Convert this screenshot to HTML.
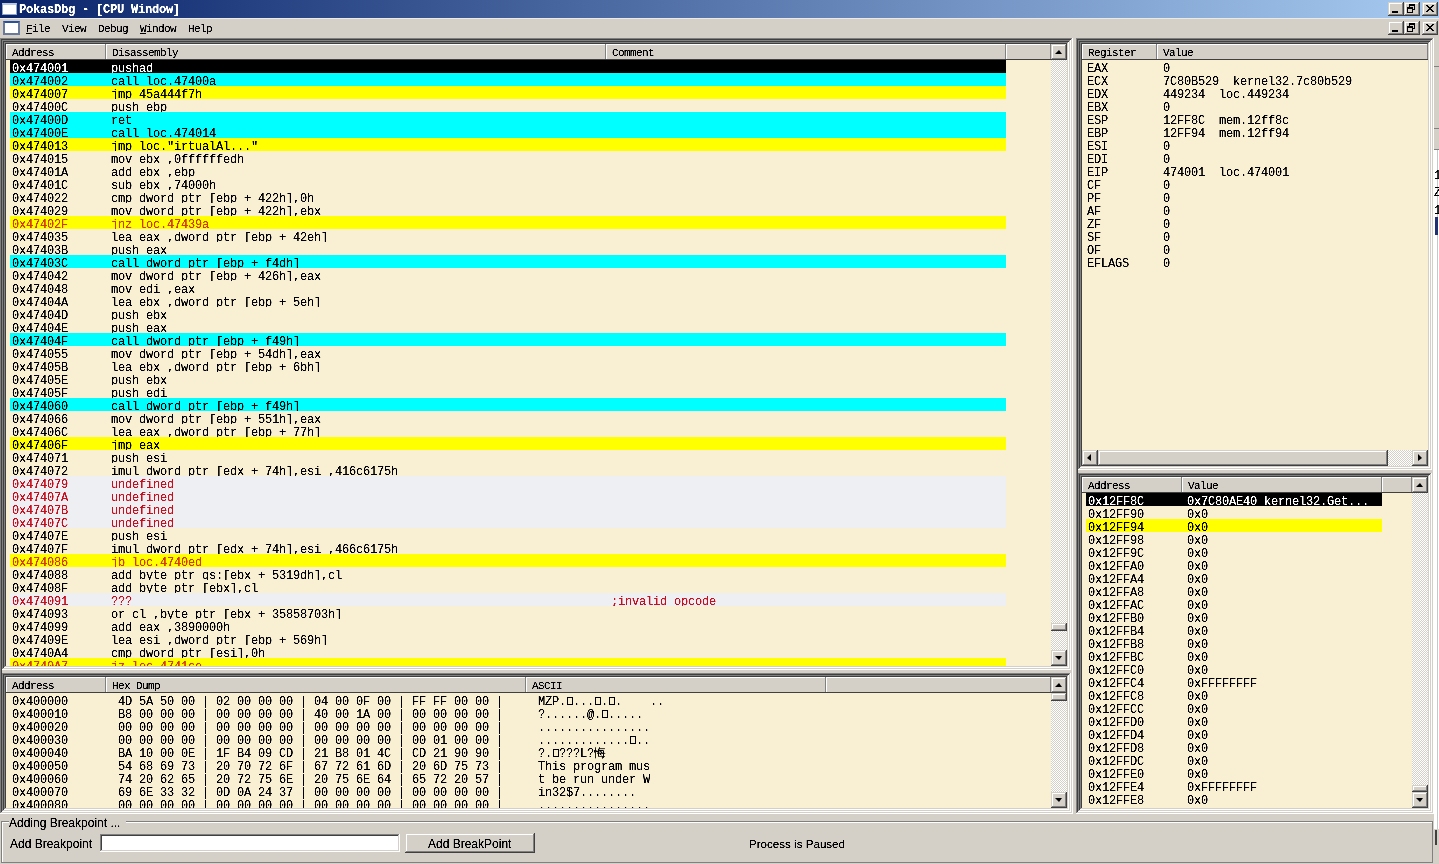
<!DOCTYPE html><html><head><meta charset="utf-8"><style>
*{margin:0;padding:0}
html,body{width:1439px;height:864px;overflow:hidden;background:#d4d0c8}
body{position:relative}
i,b,div{position:absolute;display:block}
b{font-weight:normal;white-space:pre;line-height:13px}
.m{font-family:"Liberation Mono",monospace;font-size:12px;letter-spacing:-0.2px}
.h{font-family:"Liberation Mono",monospace;font-size:11px;letter-spacing:-0.6px}
.s{font-family:"Liberation Sans",sans-serif;font-size:12px;line-height:14px}
.x{font-family:"Liberation Sans",sans-serif;font-size:10px;line-height:12px;font-weight:bold}
</style></head><body><svg width="0" height="0" style="position:absolute"><filter id="th" x="0" y="0" width="100%" height="100%"><feComponentTransfer><feFuncA type="discrete" tableValues="0 1"/></feComponentTransfer></filter><filter id="th2" x="0" y="0" width="100%" height="100%"><feComponentTransfer><feFuncA type="linear" slope="2.5" intercept="-0.5"/></feComponentTransfer></filter></svg><i style="left:0px;top:0px;width:1439px;height:864px;background:#d4d0c8;"></i>
<i style="left:0px;top:0px;width:1439px;height:18px;background:linear-gradient(to right,#0a246a,#a6caf0);"></i>
<i style="left:2px;top:3px;width:15px;height:12px;background:#ffffff;border:1px solid #8ea4c8;border-top:2px solid #b8c8e0;box-sizing:border-box"></i>
<i style="left:1388px;top:2px;width:16px;height:14px;background:#d4d0c8;"></i>
<i style="left:1388px;top:2px;width:16px;height:1px;background:#d4d0c8;"></i>
<i style="left:1388px;top:2px;width:1px;height:14px;background:#d4d0c8;"></i>
<i style="left:1389px;top:3px;width:14px;height:1px;background:#ffffff;"></i>
<i style="left:1389px;top:3px;width:1px;height:12px;background:#ffffff;"></i>
<i style="left:1388px;top:15px;width:16px;height:1px;background:#404040;"></i>
<i style="left:1403px;top:2px;width:1px;height:14px;background:#404040;"></i>
<i style="left:1389px;top:14px;width:14px;height:1px;background:#808080;"></i>
<i style="left:1402px;top:3px;width:1px;height:12px;background:#808080;"></i>
<i style="left:1404px;top:2px;width:16px;height:14px;background:#d4d0c8;"></i>
<i style="left:1404px;top:2px;width:16px;height:1px;background:#d4d0c8;"></i>
<i style="left:1404px;top:2px;width:1px;height:14px;background:#d4d0c8;"></i>
<i style="left:1405px;top:3px;width:14px;height:1px;background:#ffffff;"></i>
<i style="left:1405px;top:3px;width:1px;height:12px;background:#ffffff;"></i>
<i style="left:1404px;top:15px;width:16px;height:1px;background:#404040;"></i>
<i style="left:1419px;top:2px;width:1px;height:14px;background:#404040;"></i>
<i style="left:1405px;top:14px;width:14px;height:1px;background:#808080;"></i>
<i style="left:1418px;top:3px;width:1px;height:12px;background:#808080;"></i>
<i style="left:1422px;top:2px;width:16px;height:14px;background:#d4d0c8;"></i>
<i style="left:1422px;top:2px;width:16px;height:1px;background:#d4d0c8;"></i>
<i style="left:1422px;top:2px;width:1px;height:14px;background:#d4d0c8;"></i>
<i style="left:1423px;top:3px;width:14px;height:1px;background:#ffffff;"></i>
<i style="left:1423px;top:3px;width:1px;height:12px;background:#ffffff;"></i>
<i style="left:1422px;top:15px;width:16px;height:1px;background:#404040;"></i>
<i style="left:1437px;top:2px;width:1px;height:14px;background:#404040;"></i>
<i style="left:1423px;top:14px;width:14px;height:1px;background:#808080;"></i>
<i style="left:1436px;top:3px;width:1px;height:12px;background:#808080;"></i>
<i style="left:0px;top:18px;width:1439px;height:20px;background:#d4d0c8;"></i>
<i style="left:0px;top:18px;width:1439px;height:1px;background:#eceae6;"></i>
<i style="left:3px;top:21px;width:17px;height:14px;background:#fff;border:2px solid #6a7a9a;border-top:2px solid #2850a0;box-sizing:border-box"></i>
<i style="left:26px;top:33px;width:6px;height:1px;background:#000;"></i>
<i style="left:140px;top:33px;width:6px;height:1px;background:#000;"></i>
<i style="left:1388px;top:21px;width:16px;height:14px;background:#d4d0c8;"></i>
<i style="left:1388px;top:21px;width:16px;height:1px;background:#d4d0c8;"></i>
<i style="left:1388px;top:21px;width:1px;height:14px;background:#d4d0c8;"></i>
<i style="left:1389px;top:22px;width:14px;height:1px;background:#ffffff;"></i>
<i style="left:1389px;top:22px;width:1px;height:12px;background:#ffffff;"></i>
<i style="left:1388px;top:34px;width:16px;height:1px;background:#404040;"></i>
<i style="left:1403px;top:21px;width:1px;height:14px;background:#404040;"></i>
<i style="left:1389px;top:33px;width:14px;height:1px;background:#808080;"></i>
<i style="left:1402px;top:22px;width:1px;height:12px;background:#808080;"></i>
<i style="left:1404px;top:21px;width:16px;height:14px;background:#d4d0c8;"></i>
<i style="left:1404px;top:21px;width:16px;height:1px;background:#d4d0c8;"></i>
<i style="left:1404px;top:21px;width:1px;height:14px;background:#d4d0c8;"></i>
<i style="left:1405px;top:22px;width:14px;height:1px;background:#ffffff;"></i>
<i style="left:1405px;top:22px;width:1px;height:12px;background:#ffffff;"></i>
<i style="left:1404px;top:34px;width:16px;height:1px;background:#404040;"></i>
<i style="left:1419px;top:21px;width:1px;height:14px;background:#404040;"></i>
<i style="left:1405px;top:33px;width:14px;height:1px;background:#808080;"></i>
<i style="left:1418px;top:22px;width:1px;height:12px;background:#808080;"></i>
<i style="left:1422px;top:21px;width:16px;height:14px;background:#d4d0c8;"></i>
<i style="left:1422px;top:21px;width:16px;height:1px;background:#d4d0c8;"></i>
<i style="left:1422px;top:21px;width:1px;height:14px;background:#d4d0c8;"></i>
<i style="left:1423px;top:22px;width:14px;height:1px;background:#ffffff;"></i>
<i style="left:1423px;top:22px;width:1px;height:12px;background:#ffffff;"></i>
<i style="left:1422px;top:34px;width:16px;height:1px;background:#404040;"></i>
<i style="left:1437px;top:21px;width:1px;height:14px;background:#404040;"></i>
<i style="left:1423px;top:33px;width:14px;height:1px;background:#808080;"></i>
<i style="left:1436px;top:22px;width:1px;height:12px;background:#808080;"></i>
<i style="left:1392px;top:11px;width:6px;height:2px;background:#000;"></i>
<i style="left:1409px;top:4px;width:4px;height:3px;border:1px solid #000;border-top-width:2px;background:transparent"></i>
<i style="left:1407px;top:7px;width:4px;height:3px;border:1px solid #000;border-top-width:2px;background:#d4d0c8"></i>
<i style="left:1426px;top:5px;width:2px;height:1px;background:#000;"></i>
<i style="left:1432px;top:5px;width:2px;height:1px;background:#000;"></i>
<i style="left:1427px;top:6px;width:2px;height:1px;background:#000;"></i>
<i style="left:1431px;top:6px;width:2px;height:1px;background:#000;"></i>
<i style="left:1428px;top:7px;width:2px;height:1px;background:#000;"></i>
<i style="left:1430px;top:7px;width:2px;height:1px;background:#000;"></i>
<i style="left:1429px;top:8px;width:2px;height:1px;background:#000;"></i>
<i style="left:1428px;top:9px;width:2px;height:1px;background:#000;"></i>
<i style="left:1430px;top:9px;width:2px;height:1px;background:#000;"></i>
<i style="left:1427px;top:10px;width:2px;height:1px;background:#000;"></i>
<i style="left:1431px;top:10px;width:2px;height:1px;background:#000;"></i>
<i style="left:1426px;top:11px;width:2px;height:1px;background:#000;"></i>
<i style="left:1432px;top:11px;width:2px;height:1px;background:#000;"></i>
<i style="left:1392px;top:30px;width:6px;height:2px;background:#000;"></i>
<i style="left:1409px;top:23px;width:4px;height:3px;border:1px solid #000;border-top-width:2px;background:transparent"></i>
<i style="left:1407px;top:26px;width:4px;height:3px;border:1px solid #000;border-top-width:2px;background:#d4d0c8"></i>
<i style="left:1426px;top:24px;width:2px;height:1px;background:#000;"></i>
<i style="left:1432px;top:24px;width:2px;height:1px;background:#000;"></i>
<i style="left:1427px;top:25px;width:2px;height:1px;background:#000;"></i>
<i style="left:1431px;top:25px;width:2px;height:1px;background:#000;"></i>
<i style="left:1428px;top:26px;width:2px;height:1px;background:#000;"></i>
<i style="left:1430px;top:26px;width:2px;height:1px;background:#000;"></i>
<i style="left:1429px;top:27px;width:2px;height:1px;background:#000;"></i>
<i style="left:1428px;top:28px;width:2px;height:1px;background:#000;"></i>
<i style="left:1430px;top:28px;width:2px;height:1px;background:#000;"></i>
<i style="left:1427px;top:29px;width:2px;height:1px;background:#000;"></i>
<i style="left:1431px;top:29px;width:2px;height:1px;background:#000;"></i>
<i style="left:1426px;top:30px;width:2px;height:1px;background:#000;"></i>
<i style="left:1432px;top:30px;width:2px;height:1px;background:#000;"></i>
<i style="left:6px;top:44px;width:1061px;height:622px;background:#f9f0d3;"></i>
<i style="left:6px;top:677px;width:1061px;height:131px;background:#f9f0d3;"></i>
<i style="left:1082px;top:44px;width:346px;height:422px;background:#f9f0d3;"></i>
<i style="left:1082px;top:477px;width:346px;height:331px;background:#f9f0d3;"></i>
<i style="left:5px;top:43px;width:1063px;height:1px;background:#404040;"></i>
<i style="left:5px;top:43px;width:1px;height:624px;background:#404040;"></i>
<i style="left:5px;top:666px;width:1063px;height:1px;background:#d4d0c8;"></i>
<i style="left:1067px;top:43px;width:1px;height:624px;background:#d4d0c8;"></i>
<i style="left:4px;top:42px;width:1065px;height:1px;background:#808080;"></i>
<i style="left:4px;top:42px;width:1px;height:626px;background:#808080;"></i>
<i style="left:4px;top:667px;width:1065px;height:1px;background:#ffffff;"></i>
<i style="left:1068px;top:42px;width:1px;height:626px;background:#ffffff;"></i>
<i style="left:3px;top:41px;width:1067px;height:1px;background:#404040;"></i>
<i style="left:3px;top:41px;width:1px;height:628px;background:#404040;"></i>
<i style="left:3px;top:668px;width:1067px;height:1px;background:#d4d0c8;"></i>
<i style="left:1069px;top:41px;width:1px;height:628px;background:#d4d0c8;"></i>
<i style="left:2px;top:40px;width:1069px;height:1px;background:#808080;"></i>
<i style="left:2px;top:40px;width:1px;height:630px;background:#808080;"></i>
<i style="left:2px;top:669px;width:1069px;height:1px;background:#ffffff;"></i>
<i style="left:1070px;top:40px;width:1px;height:630px;background:#ffffff;"></i>
<i style="left:5px;top:676px;width:1063px;height:1px;background:#404040;"></i>
<i style="left:5px;top:676px;width:1px;height:133px;background:#404040;"></i>
<i style="left:5px;top:808px;width:1063px;height:1px;background:#d4d0c8;"></i>
<i style="left:1067px;top:676px;width:1px;height:133px;background:#d4d0c8;"></i>
<i style="left:4px;top:675px;width:1065px;height:1px;background:#808080;"></i>
<i style="left:4px;top:675px;width:1px;height:135px;background:#808080;"></i>
<i style="left:4px;top:809px;width:1065px;height:1px;background:#ffffff;"></i>
<i style="left:1068px;top:675px;width:1px;height:135px;background:#ffffff;"></i>
<i style="left:3px;top:674px;width:1067px;height:1px;background:#404040;"></i>
<i style="left:3px;top:674px;width:1px;height:137px;background:#404040;"></i>
<i style="left:3px;top:810px;width:1067px;height:1px;background:#d4d0c8;"></i>
<i style="left:1069px;top:674px;width:1px;height:137px;background:#d4d0c8;"></i>
<i style="left:2px;top:673px;width:1069px;height:1px;background:#808080;"></i>
<i style="left:2px;top:673px;width:1px;height:139px;background:#808080;"></i>
<i style="left:2px;top:811px;width:1069px;height:1px;background:#ffffff;"></i>
<i style="left:1070px;top:673px;width:1px;height:139px;background:#ffffff;"></i>
<i style="left:1081px;top:43px;width:348px;height:1px;background:#404040;"></i>
<i style="left:1081px;top:43px;width:1px;height:424px;background:#404040;"></i>
<i style="left:1081px;top:466px;width:348px;height:1px;background:#d4d0c8;"></i>
<i style="left:1428px;top:43px;width:1px;height:424px;background:#d4d0c8;"></i>
<i style="left:1080px;top:42px;width:350px;height:1px;background:#808080;"></i>
<i style="left:1080px;top:42px;width:1px;height:426px;background:#808080;"></i>
<i style="left:1080px;top:467px;width:350px;height:1px;background:#ffffff;"></i>
<i style="left:1429px;top:42px;width:1px;height:426px;background:#ffffff;"></i>
<i style="left:1079px;top:41px;width:352px;height:1px;background:#404040;"></i>
<i style="left:1079px;top:41px;width:1px;height:428px;background:#404040;"></i>
<i style="left:1079px;top:468px;width:352px;height:1px;background:#d4d0c8;"></i>
<i style="left:1430px;top:41px;width:1px;height:428px;background:#d4d0c8;"></i>
<i style="left:1078px;top:40px;width:354px;height:1px;background:#808080;"></i>
<i style="left:1078px;top:40px;width:1px;height:430px;background:#808080;"></i>
<i style="left:1078px;top:469px;width:354px;height:1px;background:#ffffff;"></i>
<i style="left:1431px;top:40px;width:1px;height:430px;background:#ffffff;"></i>
<i style="left:1081px;top:476px;width:348px;height:1px;background:#404040;"></i>
<i style="left:1081px;top:476px;width:1px;height:333px;background:#404040;"></i>
<i style="left:1081px;top:808px;width:348px;height:1px;background:#d4d0c8;"></i>
<i style="left:1428px;top:476px;width:1px;height:333px;background:#d4d0c8;"></i>
<i style="left:1080px;top:475px;width:350px;height:1px;background:#808080;"></i>
<i style="left:1080px;top:475px;width:1px;height:335px;background:#808080;"></i>
<i style="left:1080px;top:809px;width:350px;height:1px;background:#ffffff;"></i>
<i style="left:1429px;top:475px;width:1px;height:335px;background:#ffffff;"></i>
<i style="left:1079px;top:474px;width:352px;height:1px;background:#404040;"></i>
<i style="left:1079px;top:474px;width:1px;height:337px;background:#404040;"></i>
<i style="left:1079px;top:810px;width:352px;height:1px;background:#d4d0c8;"></i>
<i style="left:1430px;top:474px;width:1px;height:337px;background:#d4d0c8;"></i>
<i style="left:1078px;top:473px;width:354px;height:1px;background:#808080;"></i>
<i style="left:1078px;top:473px;width:1px;height:339px;background:#808080;"></i>
<i style="left:1078px;top:811px;width:354px;height:1px;background:#ffffff;"></i>
<i style="left:1431px;top:473px;width:1px;height:339px;background:#ffffff;"></i>
<i style="left:0px;top:38px;width:1px;height:775px;background:#808080;"></i>
<i style="left:1px;top:39px;width:1px;height:773px;background:#404040;"></i>
<i style="left:0px;top:38px;width:1072px;height:1px;background:#808080;"></i>
<i style="left:1px;top:39px;width:1070px;height:1px;background:#404040;"></i>
<i style="left:1071px;top:39px;width:1px;height:774px;background:#d4d0c8;"></i>
<i style="left:1072px;top:38px;width:1px;height:776px;background:#ffffff;"></i>
<i style="left:1px;top:812px;width:1071px;height:1px;background:#d4d0c8;"></i>
<i style="left:0px;top:813px;width:1073px;height:1px;background:#ffffff;"></i>
<i style="left:1076px;top:38px;width:1px;height:775px;background:#808080;"></i>
<i style="left:1077px;top:39px;width:1px;height:773px;background:#404040;"></i>
<i style="left:1076px;top:38px;width:357px;height:1px;background:#808080;"></i>
<i style="left:1077px;top:39px;width:355px;height:1px;background:#404040;"></i>
<i style="left:1432px;top:39px;width:1px;height:774px;background:#d4d0c8;"></i>
<i style="left:1433px;top:38px;width:1px;height:776px;background:#ffffff;"></i>
<i style="left:1077px;top:812px;width:356px;height:1px;background:#d4d0c8;"></i>
<i style="left:1076px;top:813px;width:358px;height:1px;background:#ffffff;"></i>
<i style="left:6px;top:44px;width:1045px;height:16px;background:#d4d0c8;"></i>
<i style="left:6px;top:44px;width:100px;height:1px;background:#ffffff;"></i>
<i style="left:6px;top:44px;width:1px;height:16px;background:#ffffff;"></i>
<i style="left:105px;top:44px;width:1px;height:16px;background:#808080;"></i>
<i style="left:106px;top:44px;width:500px;height:1px;background:#ffffff;"></i>
<i style="left:106px;top:44px;width:1px;height:16px;background:#ffffff;"></i>
<i style="left:605px;top:44px;width:1px;height:16px;background:#808080;"></i>
<i style="left:606px;top:44px;width:400px;height:1px;background:#ffffff;"></i>
<i style="left:606px;top:44px;width:1px;height:16px;background:#ffffff;"></i>
<i style="left:1005px;top:44px;width:1px;height:16px;background:#808080;"></i>
<i style="left:1006px;top:44px;width:45px;height:1px;background:#ffffff;"></i>
<i style="left:1006px;top:44px;width:1px;height:16px;background:#ffffff;"></i>
<i style="left:1050px;top:44px;width:1px;height:16px;background:#808080;"></i>
<i style="left:6px;top:59px;width:1045px;height:1px;background:#404040;"></i>
<i style="left:1051px;top:60px;width:16px;height:590px;background:repeating-conic-gradient(#ffffff 0 25%,#d4d0c8 0 50%) 0 0/2px 2px;"></i>
<i style="left:1051px;top:44px;width:16px;height:16px;background:#d4d0c8;"></i>
<i style="left:1051px;top:44px;width:16px;height:1px;background:#d4d0c8;"></i>
<i style="left:1051px;top:44px;width:1px;height:16px;background:#d4d0c8;"></i>
<i style="left:1052px;top:45px;width:14px;height:1px;background:#ffffff;"></i>
<i style="left:1052px;top:45px;width:1px;height:14px;background:#ffffff;"></i>
<i style="left:1051px;top:59px;width:16px;height:1px;background:#404040;"></i>
<i style="left:1066px;top:44px;width:1px;height:16px;background:#404040;"></i>
<i style="left:1052px;top:58px;width:14px;height:1px;background:#808080;"></i>
<i style="left:1065px;top:45px;width:1px;height:14px;background:#808080;"></i>
<i style="left:1055px;top:50px;width:0;height:0;border-left:4px solid transparent;border-right:3px solid transparent;border-bottom:4px solid #000"></i>
<i style="left:1051px;top:650px;width:16px;height:16px;background:#d4d0c8;"></i>
<i style="left:1051px;top:650px;width:16px;height:1px;background:#d4d0c8;"></i>
<i style="left:1051px;top:650px;width:1px;height:16px;background:#d4d0c8;"></i>
<i style="left:1052px;top:651px;width:14px;height:1px;background:#ffffff;"></i>
<i style="left:1052px;top:651px;width:1px;height:14px;background:#ffffff;"></i>
<i style="left:1051px;top:665px;width:16px;height:1px;background:#404040;"></i>
<i style="left:1066px;top:650px;width:1px;height:16px;background:#404040;"></i>
<i style="left:1052px;top:664px;width:14px;height:1px;background:#808080;"></i>
<i style="left:1065px;top:651px;width:1px;height:14px;background:#808080;"></i>
<i style="left:1055px;top:656px;width:0;height:0;border-left:4px solid transparent;border-right:3px solid transparent;border-top:4px solid #000"></i>
<i style="left:1051px;top:623px;width:16px;height:8px;background:#d4d0c8;"></i>
<i style="left:1051px;top:623px;width:16px;height:1px;background:#d4d0c8;"></i>
<i style="left:1051px;top:623px;width:1px;height:8px;background:#d4d0c8;"></i>
<i style="left:1052px;top:624px;width:14px;height:1px;background:#ffffff;"></i>
<i style="left:1052px;top:624px;width:1px;height:6px;background:#ffffff;"></i>
<i style="left:1051px;top:630px;width:16px;height:1px;background:#404040;"></i>
<i style="left:1066px;top:623px;width:1px;height:8px;background:#404040;"></i>
<i style="left:1052px;top:629px;width:14px;height:1px;background:#808080;"></i>
<i style="left:1065px;top:624px;width:1px;height:6px;background:#808080;"></i>
<div style="left:6px;top:60px;width:1045px;height:606px;overflow:hidden">
<i style="left:4px;top:0px;width:996px;height:13px;background:#000000;"></i>
<i style="left:4px;top:13px;width:996px;height:13px;background:#00ffff;"></i>
<i style="left:4px;top:26px;width:996px;height:13px;background:#ffff00;"></i>
<i style="left:4px;top:52px;width:996px;height:13px;background:#00ffff;"></i>
<i style="left:4px;top:65px;width:996px;height:13px;background:#00ffff;"></i>
<i style="left:4px;top:78px;width:996px;height:13px;background:#ffff00;"></i>
<i style="left:4px;top:156px;width:996px;height:13px;background:#ffff00;"></i>
<i style="left:4px;top:195px;width:996px;height:13px;background:#00ffff;"></i>
<i style="left:4px;top:273px;width:996px;height:13px;background:#00ffff;"></i>
<i style="left:4px;top:338px;width:996px;height:13px;background:#00ffff;"></i>
<i style="left:4px;top:377px;width:996px;height:13px;background:#ffff00;"></i>
<i style="left:4px;top:416px;width:996px;height:13px;background:#eeeff2;"></i>
<i style="left:4px;top:429px;width:996px;height:13px;background:#eeeff2;"></i>
<i style="left:4px;top:442px;width:996px;height:13px;background:#eeeff2;"></i>
<i style="left:4px;top:455px;width:996px;height:13px;background:#eeeff2;"></i>
<i style="left:4px;top:494px;width:996px;height:13px;background:#ffff00;"></i>
<i style="left:4px;top:533px;width:996px;height:13px;background:#eeeff2;"></i>
<i style="left:4px;top:598px;width:996px;height:13px;background:#ffff00;"></i>
</div>
<i style="left:6px;top:677px;width:1045px;height:16px;background:#d4d0c8;"></i>
<i style="left:6px;top:677px;width:100px;height:1px;background:#ffffff;"></i>
<i style="left:6px;top:677px;width:1px;height:16px;background:#ffffff;"></i>
<i style="left:105px;top:677px;width:1px;height:16px;background:#808080;"></i>
<i style="left:106px;top:677px;width:420px;height:1px;background:#ffffff;"></i>
<i style="left:106px;top:677px;width:1px;height:16px;background:#ffffff;"></i>
<i style="left:525px;top:677px;width:1px;height:16px;background:#808080;"></i>
<i style="left:526px;top:677px;width:300px;height:1px;background:#ffffff;"></i>
<i style="left:526px;top:677px;width:1px;height:16px;background:#ffffff;"></i>
<i style="left:825px;top:677px;width:1px;height:16px;background:#808080;"></i>
<i style="left:826px;top:677px;width:225px;height:1px;background:#ffffff;"></i>
<i style="left:826px;top:677px;width:1px;height:16px;background:#ffffff;"></i>
<i style="left:1050px;top:677px;width:1px;height:16px;background:#808080;"></i>
<i style="left:6px;top:692px;width:1045px;height:1px;background:#404040;"></i>
<i style="left:1051px;top:693px;width:16px;height:99px;background:repeating-conic-gradient(#ffffff 0 25%,#d4d0c8 0 50%) 0 0/2px 2px;"></i>
<i style="left:1051px;top:677px;width:16px;height:16px;background:#d4d0c8;"></i>
<i style="left:1051px;top:677px;width:16px;height:1px;background:#d4d0c8;"></i>
<i style="left:1051px;top:677px;width:1px;height:16px;background:#d4d0c8;"></i>
<i style="left:1052px;top:678px;width:14px;height:1px;background:#ffffff;"></i>
<i style="left:1052px;top:678px;width:1px;height:14px;background:#ffffff;"></i>
<i style="left:1051px;top:692px;width:16px;height:1px;background:#404040;"></i>
<i style="left:1066px;top:677px;width:1px;height:16px;background:#404040;"></i>
<i style="left:1052px;top:691px;width:14px;height:1px;background:#808080;"></i>
<i style="left:1065px;top:678px;width:1px;height:14px;background:#808080;"></i>
<i style="left:1055px;top:683px;width:0;height:0;border-left:4px solid transparent;border-right:3px solid transparent;border-bottom:4px solid #000"></i>
<i style="left:1051px;top:792px;width:16px;height:16px;background:#d4d0c8;"></i>
<i style="left:1051px;top:792px;width:16px;height:1px;background:#d4d0c8;"></i>
<i style="left:1051px;top:792px;width:1px;height:16px;background:#d4d0c8;"></i>
<i style="left:1052px;top:793px;width:14px;height:1px;background:#ffffff;"></i>
<i style="left:1052px;top:793px;width:1px;height:14px;background:#ffffff;"></i>
<i style="left:1051px;top:807px;width:16px;height:1px;background:#404040;"></i>
<i style="left:1066px;top:792px;width:1px;height:16px;background:#404040;"></i>
<i style="left:1052px;top:806px;width:14px;height:1px;background:#808080;"></i>
<i style="left:1065px;top:793px;width:1px;height:14px;background:#808080;"></i>
<i style="left:1055px;top:798px;width:0;height:0;border-left:4px solid transparent;border-right:3px solid transparent;border-top:4px solid #000"></i>
<i style="left:1051px;top:693px;width:16px;height:8px;background:#d4d0c8;"></i>
<i style="left:1051px;top:693px;width:16px;height:1px;background:#d4d0c8;"></i>
<i style="left:1051px;top:693px;width:1px;height:8px;background:#d4d0c8;"></i>
<i style="left:1052px;top:694px;width:14px;height:1px;background:#ffffff;"></i>
<i style="left:1052px;top:694px;width:1px;height:6px;background:#ffffff;"></i>
<i style="left:1051px;top:700px;width:16px;height:1px;background:#404040;"></i>
<i style="left:1066px;top:693px;width:1px;height:8px;background:#404040;"></i>
<i style="left:1052px;top:699px;width:14px;height:1px;background:#808080;"></i>
<i style="left:1065px;top:694px;width:1px;height:6px;background:#808080;"></i>
<div style="left:6px;top:693px;width:1045px;height:115px;overflow:hidden">
<i style="left:561px;top:4px;width:4px;height:6px;border:1px solid #000"></i>
<i style="left:589px;top:4px;width:4px;height:6px;border:1px solid #000"></i>
<i style="left:603px;top:4px;width:4px;height:6px;border:1px solid #000"></i>
<i style="left:596px;top:17px;width:4px;height:6px;border:1px solid #000"></i>
<i style="left:624px;top:43px;width:4px;height:6px;border:1px solid #000"></i>
<i style="left:547px;top:56px;width:4px;height:6px;border:1px solid #000"></i>
</div>
<i style="left:1082px;top:44px;width:346px;height:16px;background:#d4d0c8;"></i>
<i style="left:1082px;top:44px;width:75px;height:1px;background:#ffffff;"></i>
<i style="left:1082px;top:44px;width:1px;height:16px;background:#ffffff;"></i>
<i style="left:1156px;top:44px;width:1px;height:16px;background:#808080;"></i>
<i style="left:1157px;top:44px;width:271px;height:1px;background:#ffffff;"></i>
<i style="left:1157px;top:44px;width:1px;height:16px;background:#ffffff;"></i>
<i style="left:1427px;top:44px;width:1px;height:16px;background:#808080;"></i>
<i style="left:1082px;top:59px;width:346px;height:1px;background:#404040;"></i>
<i style="left:1098px;top:450px;width:314px;height:16px;background:repeating-conic-gradient(#ffffff 0 25%,#d4d0c8 0 50%) 0 0/2px 2px;"></i>
<i style="left:1082px;top:450px;width:16px;height:16px;background:#d4d0c8;"></i>
<i style="left:1082px;top:450px;width:16px;height:1px;background:#d4d0c8;"></i>
<i style="left:1082px;top:450px;width:1px;height:16px;background:#d4d0c8;"></i>
<i style="left:1083px;top:451px;width:14px;height:1px;background:#ffffff;"></i>
<i style="left:1083px;top:451px;width:1px;height:14px;background:#ffffff;"></i>
<i style="left:1082px;top:465px;width:16px;height:1px;background:#404040;"></i>
<i style="left:1097px;top:450px;width:1px;height:16px;background:#404040;"></i>
<i style="left:1083px;top:464px;width:14px;height:1px;background:#808080;"></i>
<i style="left:1096px;top:451px;width:1px;height:14px;background:#808080;"></i>
<i style="left:1087px;top:454px;width:0;height:0;border-top:4px solid transparent;border-bottom:3px solid transparent;border-right:4px solid #000"></i>
<i style="left:1098px;top:450px;width:290px;height:16px;background:#d4d0c8;"></i>
<i style="left:1098px;top:450px;width:290px;height:1px;background:#d4d0c8;"></i>
<i style="left:1098px;top:450px;width:1px;height:16px;background:#d4d0c8;"></i>
<i style="left:1099px;top:451px;width:288px;height:1px;background:#ffffff;"></i>
<i style="left:1099px;top:451px;width:1px;height:14px;background:#ffffff;"></i>
<i style="left:1098px;top:465px;width:290px;height:1px;background:#404040;"></i>
<i style="left:1387px;top:450px;width:1px;height:16px;background:#404040;"></i>
<i style="left:1099px;top:464px;width:288px;height:1px;background:#808080;"></i>
<i style="left:1386px;top:451px;width:1px;height:14px;background:#808080;"></i>
<i style="left:1412px;top:450px;width:16px;height:16px;background:#d4d0c8;"></i>
<i style="left:1412px;top:450px;width:16px;height:1px;background:#d4d0c8;"></i>
<i style="left:1412px;top:450px;width:1px;height:16px;background:#d4d0c8;"></i>
<i style="left:1413px;top:451px;width:14px;height:1px;background:#ffffff;"></i>
<i style="left:1413px;top:451px;width:1px;height:14px;background:#ffffff;"></i>
<i style="left:1412px;top:465px;width:16px;height:1px;background:#404040;"></i>
<i style="left:1427px;top:450px;width:1px;height:16px;background:#404040;"></i>
<i style="left:1413px;top:464px;width:14px;height:1px;background:#808080;"></i>
<i style="left:1426px;top:451px;width:1px;height:14px;background:#808080;"></i>
<i style="left:1418px;top:454px;width:0;height:0;border-top:4px solid transparent;border-bottom:3px solid transparent;border-left:4px solid #000"></i>
<i style="left:1082px;top:477px;width:330px;height:16px;background:#d4d0c8;"></i>
<i style="left:1082px;top:477px;width:100px;height:1px;background:#ffffff;"></i>
<i style="left:1082px;top:477px;width:1px;height:16px;background:#ffffff;"></i>
<i style="left:1181px;top:477px;width:1px;height:16px;background:#808080;"></i>
<i style="left:1182px;top:477px;width:200px;height:1px;background:#ffffff;"></i>
<i style="left:1182px;top:477px;width:1px;height:16px;background:#ffffff;"></i>
<i style="left:1381px;top:477px;width:1px;height:16px;background:#808080;"></i>
<i style="left:1382px;top:477px;width:30px;height:1px;background:#ffffff;"></i>
<i style="left:1382px;top:477px;width:1px;height:16px;background:#ffffff;"></i>
<i style="left:1411px;top:477px;width:1px;height:16px;background:#808080;"></i>
<i style="left:1082px;top:492px;width:330px;height:1px;background:#404040;"></i>
<i style="left:1412px;top:493px;width:16px;height:299px;background:repeating-conic-gradient(#ffffff 0 25%,#d4d0c8 0 50%) 0 0/2px 2px;"></i>
<i style="left:1412px;top:477px;width:16px;height:16px;background:#d4d0c8;"></i>
<i style="left:1412px;top:477px;width:16px;height:1px;background:#d4d0c8;"></i>
<i style="left:1412px;top:477px;width:1px;height:16px;background:#d4d0c8;"></i>
<i style="left:1413px;top:478px;width:14px;height:1px;background:#ffffff;"></i>
<i style="left:1413px;top:478px;width:1px;height:14px;background:#ffffff;"></i>
<i style="left:1412px;top:492px;width:16px;height:1px;background:#404040;"></i>
<i style="left:1427px;top:477px;width:1px;height:16px;background:#404040;"></i>
<i style="left:1413px;top:491px;width:14px;height:1px;background:#808080;"></i>
<i style="left:1426px;top:478px;width:1px;height:14px;background:#808080;"></i>
<i style="left:1416px;top:483px;width:0;height:0;border-left:4px solid transparent;border-right:3px solid transparent;border-bottom:4px solid #000"></i>
<i style="left:1412px;top:792px;width:16px;height:16px;background:#d4d0c8;"></i>
<i style="left:1412px;top:792px;width:16px;height:1px;background:#d4d0c8;"></i>
<i style="left:1412px;top:792px;width:1px;height:16px;background:#d4d0c8;"></i>
<i style="left:1413px;top:793px;width:14px;height:1px;background:#ffffff;"></i>
<i style="left:1413px;top:793px;width:1px;height:14px;background:#ffffff;"></i>
<i style="left:1412px;top:807px;width:16px;height:1px;background:#404040;"></i>
<i style="left:1427px;top:792px;width:1px;height:16px;background:#404040;"></i>
<i style="left:1413px;top:806px;width:14px;height:1px;background:#808080;"></i>
<i style="left:1426px;top:793px;width:1px;height:14px;background:#808080;"></i>
<i style="left:1416px;top:798px;width:0;height:0;border-left:4px solid transparent;border-right:3px solid transparent;border-top:4px solid #000"></i>
<i style="left:1412px;top:785px;width:16px;height:7px;background:#d4d0c8;"></i>
<i style="left:1412px;top:785px;width:16px;height:1px;background:#d4d0c8;"></i>
<i style="left:1412px;top:785px;width:1px;height:7px;background:#d4d0c8;"></i>
<i style="left:1413px;top:786px;width:14px;height:1px;background:#ffffff;"></i>
<i style="left:1413px;top:786px;width:1px;height:5px;background:#ffffff;"></i>
<i style="left:1412px;top:791px;width:16px;height:1px;background:#404040;"></i>
<i style="left:1427px;top:785px;width:1px;height:7px;background:#404040;"></i>
<i style="left:1413px;top:790px;width:14px;height:1px;background:#808080;"></i>
<i style="left:1426px;top:786px;width:1px;height:5px;background:#808080;"></i>
<div style="left:1082px;top:493px;width:330px;height:315px;overflow:hidden">
<i style="left:4px;top:0px;width:296px;height:13px;background:#000000;"></i>
<i style="left:4px;top:26px;width:296px;height:13px;background:#ffff00;"></i>
</div>
<i style="left:1434px;top:38px;width:5px;height:112px;background:#d4d0c8;"></i>
<i style="left:1434px;top:66px;width:5px;height:1px;background:#808080;"></i>
<i style="left:1434px;top:128px;width:5px;height:1px;background:#808080;"></i>
<i style="left:1434px;top:149px;width:5px;height:1px;background:#808080;"></i>
<i style="left:1434px;top:150px;width:5px;height:679px;background:#ffffff;"></i>
<i style="left:1437px;top:150px;width:1px;height:679px;background:#c8c8c8;"></i>
<div style="left:1434px;top:150px;width:5px;height:100px;overflow:hidden">
<i style="left:1px;top:67px;width:3px;height:18px;background:#203070;"></i>
</div>
<i style="left:1434px;top:829px;width:5px;height:35px;background:#d4d0c8;"></i>
<i style="left:1435px;top:830px;width:2px;height:15px;background:#404040;"></i>
<i style="left:1px;top:821px;width:8px;height:1px;background:#808080;"></i>
<i style="left:2px;top:822px;width:7px;height:1px;background:#ffffff;"></i>
<i style="left:126px;top:821px;width:1307px;height:1px;background:#808080;"></i>
<i style="left:126px;top:822px;width:1307px;height:1px;background:#ffffff;"></i>
<i style="left:1px;top:821px;width:1px;height:42px;background:#808080;"></i>
<i style="left:2px;top:822px;width:1px;height:40px;background:#ffffff;"></i>
<i style="left:1px;top:862px;width:1432px;height:1px;background:#808080;"></i>
<i style="left:1432px;top:821px;width:1px;height:42px;background:#808080;"></i>
<i style="left:100px;top:834px;width:299px;height:18px;background:#ffffff;"></i>
<i style="left:100px;top:834px;width:299px;height:1px;background:#808080;"></i>
<i style="left:100px;top:834px;width:1px;height:18px;background:#808080;"></i>
<i style="left:101px;top:835px;width:297px;height:1px;background:#404040;"></i>
<i style="left:101px;top:835px;width:1px;height:16px;background:#404040;"></i>
<i style="left:100px;top:851px;width:300px;height:1px;background:#ffffff;"></i>
<i style="left:399px;top:834px;width:1px;height:18px;background:#ffffff;"></i>
<i style="left:101px;top:850px;width:298px;height:1px;background:#d4d0c8;"></i>
<i style="left:398px;top:835px;width:1px;height:16px;background:#d4d0c8;"></i>
<i style="left:405px;top:833px;width:130px;height:20px;background:#d4d0c8;"></i>
<i style="left:405px;top:833px;width:130px;height:1px;background:#d4d0c8;"></i>
<i style="left:405px;top:833px;width:1px;height:20px;background:#d4d0c8;"></i>
<i style="left:406px;top:834px;width:128px;height:1px;background:#ffffff;"></i>
<i style="left:406px;top:834px;width:1px;height:18px;background:#ffffff;"></i>
<i style="left:405px;top:852px;width:130px;height:1px;background:#404040;"></i>
<i style="left:534px;top:833px;width:1px;height:20px;background:#404040;"></i>
<i style="left:406px;top:851px;width:128px;height:1px;background:#808080;"></i>
<i style="left:533px;top:834px;width:1px;height:18px;background:#808080;"></i><div style="left:0;top:0;width:1439px;height:864px;filter:url(#th2);"><b class="m" style="left:19px;top:4px;color:#fff;font-weight:bold">PokasDbg - [CPU Window]</b>
<b class="h" style="left:26px;top:23px;color:#000;">File</b>
<b class="h" style="left:62px;top:23px;color:#000;">View</b>
<b class="h" style="left:98px;top:23px;color:#000;">Debug</b>
<b class="h" style="left:140px;top:23px;color:#000;">Window</b>
<b class="h" style="left:188px;top:23px;color:#000;">Help</b>
<b class="h" style="left:12px;top:47px;color:#000;">Address</b>
<b class="h" style="left:112px;top:47px;color:#000;">Disassembly</b>
<b class="h" style="left:612px;top:47px;color:#000;">Comment</b>
<div style="left:6px;top:60px;width:1045px;height:606px;overflow:hidden">
<div style="left:0;top:0px;width:1045px;height:13px;overflow:hidden">
<b class="m" style="left:6px;top:3px;color:#ffffff;">0x474001</b>
<b class="m" style="left:105px;top:3px;color:#ffffff;">pushad</b>
</div>
<div style="left:0;top:13px;width:1045px;height:13px;overflow:hidden">
<b class="m" style="left:6px;top:3px;color:#000000;">0x474002</b>
<b class="m" style="left:105px;top:3px;color:#000000;">call loc.47400a</b>
</div>
<div style="left:0;top:26px;width:1045px;height:13px;overflow:hidden">
<b class="m" style="left:6px;top:3px;color:#000000;">0x474007</b>
<b class="m" style="left:105px;top:3px;color:#000000;">jmp 45a444f7h</b>
</div>
<div style="left:0;top:39px;width:1045px;height:13px;overflow:hidden">
<b class="m" style="left:6px;top:3px;color:#000000;">0x47400C</b>
<b class="m" style="left:105px;top:3px;color:#000000;">push ebp</b>
</div>
<div style="left:0;top:52px;width:1045px;height:13px;overflow:hidden">
<b class="m" style="left:6px;top:3px;color:#000000;">0x47400D</b>
<b class="m" style="left:105px;top:3px;color:#000000;">ret</b>
</div>
<div style="left:0;top:65px;width:1045px;height:13px;overflow:hidden">
<b class="m" style="left:6px;top:3px;color:#000000;">0x47400E</b>
<b class="m" style="left:105px;top:3px;color:#000000;">call loc.474014</b>
</div>
<div style="left:0;top:78px;width:1045px;height:13px;overflow:hidden">
<b class="m" style="left:6px;top:3px;color:#000000;">0x474013</b>
<b class="m" style="left:105px;top:3px;color:#000000;">jmp loc.&quot;irtualAl...&quot;</b>
</div>
<div style="left:0;top:91px;width:1045px;height:13px;overflow:hidden">
<b class="m" style="left:6px;top:3px;color:#000000;">0x474015</b>
<b class="m" style="left:105px;top:3px;color:#000000;">mov ebx ,0ffffffedh</b>
</div>
<div style="left:0;top:104px;width:1045px;height:13px;overflow:hidden">
<b class="m" style="left:6px;top:3px;color:#000000;">0x47401A</b>
<b class="m" style="left:105px;top:3px;color:#000000;">add ebx ,ebp</b>
</div>
<div style="left:0;top:117px;width:1045px;height:13px;overflow:hidden">
<b class="m" style="left:6px;top:3px;color:#000000;">0x47401C</b>
<b class="m" style="left:105px;top:3px;color:#000000;">sub ebx ,74000h</b>
</div>
<div style="left:0;top:130px;width:1045px;height:13px;overflow:hidden">
<b class="m" style="left:6px;top:3px;color:#000000;">0x474022</b>
<b class="m" style="left:105px;top:3px;color:#000000;">cmp dword ptr [ebp + 422h],0h</b>
</div>
<div style="left:0;top:143px;width:1045px;height:13px;overflow:hidden">
<b class="m" style="left:6px;top:3px;color:#000000;">0x474029</b>
<b class="m" style="left:105px;top:3px;color:#000000;">mov dword ptr [ebp + 422h],ebx</b>
</div>
<div style="left:0;top:156px;width:1045px;height:13px;overflow:hidden">
<b class="m" style="left:6px;top:3px;color:#d83800;">0x47402F</b>
<b class="m" style="left:105px;top:3px;color:#d83800;">jnz loc.47439a</b>
</div>
<div style="left:0;top:169px;width:1045px;height:13px;overflow:hidden">
<b class="m" style="left:6px;top:3px;color:#000000;">0x474035</b>
<b class="m" style="left:105px;top:3px;color:#000000;">lea eax ,dword ptr [ebp + 42eh]</b>
</div>
<div style="left:0;top:182px;width:1045px;height:13px;overflow:hidden">
<b class="m" style="left:6px;top:3px;color:#000000;">0x47403B</b>
<b class="m" style="left:105px;top:3px;color:#000000;">push eax</b>
</div>
<div style="left:0;top:195px;width:1045px;height:13px;overflow:hidden">
<b class="m" style="left:6px;top:3px;color:#000000;">0x47403C</b>
<b class="m" style="left:105px;top:3px;color:#000000;">call dword ptr [ebp + f4dh]</b>
</div>
<div style="left:0;top:208px;width:1045px;height:13px;overflow:hidden">
<b class="m" style="left:6px;top:3px;color:#000000;">0x474042</b>
<b class="m" style="left:105px;top:3px;color:#000000;">mov dword ptr [ebp + 426h],eax</b>
</div>
<div style="left:0;top:221px;width:1045px;height:13px;overflow:hidden">
<b class="m" style="left:6px;top:3px;color:#000000;">0x474048</b>
<b class="m" style="left:105px;top:3px;color:#000000;">mov edi ,eax</b>
</div>
<div style="left:0;top:234px;width:1045px;height:13px;overflow:hidden">
<b class="m" style="left:6px;top:3px;color:#000000;">0x47404A</b>
<b class="m" style="left:105px;top:3px;color:#000000;">lea ebx ,dword ptr [ebp + 5eh]</b>
</div>
<div style="left:0;top:247px;width:1045px;height:13px;overflow:hidden">
<b class="m" style="left:6px;top:3px;color:#000000;">0x47404D</b>
<b class="m" style="left:105px;top:3px;color:#000000;">push ebx</b>
</div>
<div style="left:0;top:260px;width:1045px;height:13px;overflow:hidden">
<b class="m" style="left:6px;top:3px;color:#000000;">0x47404E</b>
<b class="m" style="left:105px;top:3px;color:#000000;">push eax</b>
</div>
<div style="left:0;top:273px;width:1045px;height:13px;overflow:hidden">
<b class="m" style="left:6px;top:3px;color:#000000;">0x47404F</b>
<b class="m" style="left:105px;top:3px;color:#000000;">call dword ptr [ebp + f49h]</b>
</div>
<div style="left:0;top:286px;width:1045px;height:13px;overflow:hidden">
<b class="m" style="left:6px;top:3px;color:#000000;">0x474055</b>
<b class="m" style="left:105px;top:3px;color:#000000;">mov dword ptr [ebp + 54dh],eax</b>
</div>
<div style="left:0;top:299px;width:1045px;height:13px;overflow:hidden">
<b class="m" style="left:6px;top:3px;color:#000000;">0x47405B</b>
<b class="m" style="left:105px;top:3px;color:#000000;">lea ebx ,dword ptr [ebp + 6bh]</b>
</div>
<div style="left:0;top:312px;width:1045px;height:13px;overflow:hidden">
<b class="m" style="left:6px;top:3px;color:#000000;">0x47405E</b>
<b class="m" style="left:105px;top:3px;color:#000000;">push ebx</b>
</div>
<div style="left:0;top:325px;width:1045px;height:13px;overflow:hidden">
<b class="m" style="left:6px;top:3px;color:#000000;">0x47405F</b>
<b class="m" style="left:105px;top:3px;color:#000000;">push edi</b>
</div>
<div style="left:0;top:338px;width:1045px;height:13px;overflow:hidden">
<b class="m" style="left:6px;top:3px;color:#000000;">0x474060</b>
<b class="m" style="left:105px;top:3px;color:#000000;">call dword ptr [ebp + f49h]</b>
</div>
<div style="left:0;top:351px;width:1045px;height:13px;overflow:hidden">
<b class="m" style="left:6px;top:3px;color:#000000;">0x474066</b>
<b class="m" style="left:105px;top:3px;color:#000000;">mov dword ptr [ebp + 551h],eax</b>
</div>
<div style="left:0;top:364px;width:1045px;height:13px;overflow:hidden">
<b class="m" style="left:6px;top:3px;color:#000000;">0x47406C</b>
<b class="m" style="left:105px;top:3px;color:#000000;">lea eax ,dword ptr [ebp + 77h]</b>
</div>
<div style="left:0;top:377px;width:1045px;height:13px;overflow:hidden">
<b class="m" style="left:6px;top:3px;color:#000000;">0x47406F</b>
<b class="m" style="left:105px;top:3px;color:#000000;">jmp eax</b>
</div>
<div style="left:0;top:390px;width:1045px;height:13px;overflow:hidden">
<b class="m" style="left:6px;top:3px;color:#000000;">0x474071</b>
<b class="m" style="left:105px;top:3px;color:#000000;">push esi</b>
</div>
<div style="left:0;top:403px;width:1045px;height:13px;overflow:hidden">
<b class="m" style="left:6px;top:3px;color:#000000;">0x474072</b>
<b class="m" style="left:105px;top:3px;color:#000000;">imul dword ptr [edx + 74h],esi ,416c6175h</b>
</div>
<div style="left:0;top:416px;width:1045px;height:13px;overflow:hidden">
<b class="m" style="left:6px;top:3px;color:#c8101c;">0x474079</b>
<b class="m" style="left:105px;top:3px;color:#c8101c;">undefined</b>
</div>
<div style="left:0;top:429px;width:1045px;height:13px;overflow:hidden">
<b class="m" style="left:6px;top:3px;color:#c8101c;">0x47407A</b>
<b class="m" style="left:105px;top:3px;color:#c8101c;">undefined</b>
</div>
<div style="left:0;top:442px;width:1045px;height:13px;overflow:hidden">
<b class="m" style="left:6px;top:3px;color:#c8101c;">0x47407B</b>
<b class="m" style="left:105px;top:3px;color:#c8101c;">undefined</b>
</div>
<div style="left:0;top:455px;width:1045px;height:13px;overflow:hidden">
<b class="m" style="left:6px;top:3px;color:#c8101c;">0x47407C</b>
<b class="m" style="left:105px;top:3px;color:#c8101c;">undefined</b>
</div>
<div style="left:0;top:468px;width:1045px;height:13px;overflow:hidden">
<b class="m" style="left:6px;top:3px;color:#000000;">0x47407E</b>
<b class="m" style="left:105px;top:3px;color:#000000;">push esi</b>
</div>
<div style="left:0;top:481px;width:1045px;height:13px;overflow:hidden">
<b class="m" style="left:6px;top:3px;color:#000000;">0x47407F</b>
<b class="m" style="left:105px;top:3px;color:#000000;">imul dword ptr [edx + 74h],esi ,466c6175h</b>
</div>
<div style="left:0;top:494px;width:1045px;height:13px;overflow:hidden">
<b class="m" style="left:6px;top:3px;color:#d83800;">0x474086</b>
<b class="m" style="left:105px;top:3px;color:#d83800;">jb loc.4740ed</b>
</div>
<div style="left:0;top:507px;width:1045px;height:13px;overflow:hidden">
<b class="m" style="left:6px;top:3px;color:#000000;">0x474088</b>
<b class="m" style="left:105px;top:3px;color:#000000;">add byte ptr gs:[ebx + 5319dh],cl</b>
</div>
<div style="left:0;top:520px;width:1045px;height:13px;overflow:hidden">
<b class="m" style="left:6px;top:3px;color:#000000;">0x47408F</b>
<b class="m" style="left:105px;top:3px;color:#000000;">add byte ptr [ebx],cl</b>
</div>
<div style="left:0;top:533px;width:1045px;height:13px;overflow:hidden">
<b class="m" style="left:6px;top:3px;color:#c8101c;">0x474091</b>
<b class="m" style="left:105px;top:3px;color:#c8101c;">???</b>
<b class="m" style="left:605px;top:3px;color:#c8101c;">;invalid opcode</b>
</div>
<div style="left:0;top:546px;width:1045px;height:13px;overflow:hidden">
<b class="m" style="left:6px;top:3px;color:#000000;">0x474093</b>
<b class="m" style="left:105px;top:3px;color:#000000;">or cl ,byte ptr [ebx + 35858703h]</b>
</div>
<div style="left:0;top:559px;width:1045px;height:13px;overflow:hidden">
<b class="m" style="left:6px;top:3px;color:#000000;">0x474099</b>
<b class="m" style="left:105px;top:3px;color:#000000;">add eax ,3890000h</b>
</div>
<div style="left:0;top:572px;width:1045px;height:13px;overflow:hidden">
<b class="m" style="left:6px;top:3px;color:#000000;">0x47409E</b>
<b class="m" style="left:105px;top:3px;color:#000000;">lea esi ,dword ptr [ebp + 569h]</b>
</div>
<div style="left:0;top:585px;width:1045px;height:13px;overflow:hidden">
<b class="m" style="left:6px;top:3px;color:#000000;">0x4740A4</b>
<b class="m" style="left:105px;top:3px;color:#000000;">cmp dword ptr [esi],0h</b>
</div>
<div style="left:0;top:598px;width:1045px;height:13px;overflow:hidden">
<b class="m" style="left:6px;top:3px;color:#d83800;">0x4740A7</b>
<b class="m" style="left:105px;top:3px;color:#d83800;">jz loc.4741ce</b>
</div>
</div>
<b class="h" style="left:12px;top:680px;color:#000;">Address</b>
<b class="h" style="left:112px;top:680px;color:#000;">Hex Dump</b>
<b class="h" style="left:532px;top:680px;color:#000;">ASCII</b>
<div style="left:6px;top:693px;width:1045px;height:115px;overflow:hidden">
<b class="m" style="left:6px;top:3px;color:#000;">0x400000</b>
<b class="m" style="left:105px;top:3px;color:#000;"> 4D 5A 50 00 | 02 00 00 00 | 04 00 0F 00 | FF FF 00 00 |</b>
<b class="m" style="left:525px;top:3px;color:#000;"> MZP. ... . .    ..</b>
<b class="m" style="left:6px;top:16px;color:#000;">0x400010</b>
<b class="m" style="left:105px;top:16px;color:#000;"> B8 00 00 00 | 00 00 00 00 | 40 00 1A 00 | 00 00 00 00 |</b>
<b class="m" style="left:525px;top:16px;color:#000;"> ?......@. .....</b>
<b class="m" style="left:6px;top:29px;color:#000;">0x400020</b>
<b class="m" style="left:105px;top:29px;color:#000;"> 00 00 00 00 | 00 00 00 00 | 00 00 00 00 | 00 00 00 00 |</b>
<b class="m" style="left:525px;top:29px;color:#000;"> ................</b>
<b class="m" style="left:6px;top:42px;color:#000;">0x400030</b>
<b class="m" style="left:105px;top:42px;color:#000;"> 00 00 00 00 | 00 00 00 00 | 00 00 00 00 | 00 01 00 00 |</b>
<b class="m" style="left:525px;top:42px;color:#000;"> ............. ..</b>
<b class="m" style="left:6px;top:55px;color:#000;">0x400040</b>
<b class="m" style="left:105px;top:55px;color:#000;"> BA 10 00 0E | 1F B4 09 CD | 21 B8 01 4C | CD 21 90 90 |</b>
<b class="m" style="left:525px;top:55px;color:#000;"> ?. ???L?悔</b>
<b class="m" style="left:6px;top:68px;color:#000;">0x400050</b>
<b class="m" style="left:105px;top:68px;color:#000;"> 54 68 69 73 | 20 70 72 6F | 67 72 61 6D | 20 6D 75 73 |</b>
<b class="m" style="left:525px;top:68px;color:#000;"> This program mus</b>
<b class="m" style="left:6px;top:81px;color:#000;">0x400060</b>
<b class="m" style="left:105px;top:81px;color:#000;"> 74 20 62 65 | 20 72 75 6E | 20 75 6E 64 | 65 72 20 57 |</b>
<b class="m" style="left:525px;top:81px;color:#000;"> t be run under W</b>
<b class="m" style="left:6px;top:94px;color:#000;">0x400070</b>
<b class="m" style="left:105px;top:94px;color:#000;"> 69 6E 33 32 | 0D 0A 24 37 | 00 00 00 00 | 00 00 00 00 |</b>
<b class="m" style="left:525px;top:94px;color:#000;"> in32$7........</b>
<b class="m" style="left:6px;top:107px;color:#000;">0x400080</b>
<b class="m" style="left:105px;top:107px;color:#000;"> 00 00 00 00 | 00 00 00 00 | 00 00 00 00 | 00 00 00 00 |</b>
<b class="m" style="left:525px;top:107px;color:#000;"> ................</b>
</div>
<b class="h" style="left:1088px;top:47px;color:#000;">Register</b>
<b class="h" style="left:1163px;top:47px;color:#000;">Value</b>
<b class="m" style="left:1087px;top:63px;color:#000;">EAX</b>
<b class="m" style="left:1163px;top:63px;color:#000;">0</b>
<b class="m" style="left:1087px;top:76px;color:#000;">ECX</b>
<b class="m" style="left:1163px;top:76px;color:#000;">7C80B529  kernel32.7c80b529</b>
<b class="m" style="left:1087px;top:89px;color:#000;">EDX</b>
<b class="m" style="left:1163px;top:89px;color:#000;">449234  loc.449234</b>
<b class="m" style="left:1087px;top:102px;color:#000;">EBX</b>
<b class="m" style="left:1163px;top:102px;color:#000;">0</b>
<b class="m" style="left:1087px;top:115px;color:#000;">ESP</b>
<b class="m" style="left:1163px;top:115px;color:#000;">12FF8C  mem.12ff8c</b>
<b class="m" style="left:1087px;top:128px;color:#000;">EBP</b>
<b class="m" style="left:1163px;top:128px;color:#000;">12FF94  mem.12ff94</b>
<b class="m" style="left:1087px;top:141px;color:#000;">ESI</b>
<b class="m" style="left:1163px;top:141px;color:#000;">0</b>
<b class="m" style="left:1087px;top:154px;color:#000;">EDI</b>
<b class="m" style="left:1163px;top:154px;color:#000;">0</b>
<b class="m" style="left:1087px;top:167px;color:#000;">EIP</b>
<b class="m" style="left:1163px;top:167px;color:#000;">474001  loc.474001</b>
<b class="m" style="left:1087px;top:180px;color:#000;">CF</b>
<b class="m" style="left:1163px;top:180px;color:#000;">0</b>
<b class="m" style="left:1087px;top:193px;color:#000;">PF</b>
<b class="m" style="left:1163px;top:193px;color:#000;">0</b>
<b class="m" style="left:1087px;top:206px;color:#000;">AF</b>
<b class="m" style="left:1163px;top:206px;color:#000;">0</b>
<b class="m" style="left:1087px;top:219px;color:#000;">ZF</b>
<b class="m" style="left:1163px;top:219px;color:#000;">0</b>
<b class="m" style="left:1087px;top:232px;color:#000;">SF</b>
<b class="m" style="left:1163px;top:232px;color:#000;">0</b>
<b class="m" style="left:1087px;top:245px;color:#000;">OF</b>
<b class="m" style="left:1163px;top:245px;color:#000;">0</b>
<b class="m" style="left:1087px;top:258px;color:#000;">EFLAGS</b>
<b class="m" style="left:1163px;top:258px;color:#000;">0</b>
<b class="h" style="left:1088px;top:480px;color:#000;">Address</b>
<b class="h" style="left:1188px;top:480px;color:#000;">Value</b>
<div style="left:1082px;top:493px;width:330px;height:315px;overflow:hidden">
<div style="left:0;top:0px;width:330px;height:13px;overflow:hidden">
<b class="m" style="left:6px;top:3px;color:#ffffff;">0x12FF8C</b>
<b class="m" style="left:105px;top:3px;color:#ffffff;">0x7C80AE40 kernel32.Get...</b>
</div>
<div style="left:0;top:13px;width:330px;height:13px;overflow:hidden">
<b class="m" style="left:6px;top:3px;color:#000000;">0x12FF90</b>
<b class="m" style="left:105px;top:3px;color:#000000;">0x0</b>
</div>
<div style="left:0;top:26px;width:330px;height:13px;overflow:hidden">
<b class="m" style="left:6px;top:3px;color:#000000;">0x12FF94</b>
<b class="m" style="left:105px;top:3px;color:#000000;">0x0</b>
</div>
<div style="left:0;top:39px;width:330px;height:13px;overflow:hidden">
<b class="m" style="left:6px;top:3px;color:#000000;">0x12FF98</b>
<b class="m" style="left:105px;top:3px;color:#000000;">0x0</b>
</div>
<div style="left:0;top:52px;width:330px;height:13px;overflow:hidden">
<b class="m" style="left:6px;top:3px;color:#000000;">0x12FF9C</b>
<b class="m" style="left:105px;top:3px;color:#000000;">0x0</b>
</div>
<div style="left:0;top:65px;width:330px;height:13px;overflow:hidden">
<b class="m" style="left:6px;top:3px;color:#000000;">0x12FFA0</b>
<b class="m" style="left:105px;top:3px;color:#000000;">0x0</b>
</div>
<div style="left:0;top:78px;width:330px;height:13px;overflow:hidden">
<b class="m" style="left:6px;top:3px;color:#000000;">0x12FFA4</b>
<b class="m" style="left:105px;top:3px;color:#000000;">0x0</b>
</div>
<div style="left:0;top:91px;width:330px;height:13px;overflow:hidden">
<b class="m" style="left:6px;top:3px;color:#000000;">0x12FFA8</b>
<b class="m" style="left:105px;top:3px;color:#000000;">0x0</b>
</div>
<div style="left:0;top:104px;width:330px;height:13px;overflow:hidden">
<b class="m" style="left:6px;top:3px;color:#000000;">0x12FFAC</b>
<b class="m" style="left:105px;top:3px;color:#000000;">0x0</b>
</div>
<div style="left:0;top:117px;width:330px;height:13px;overflow:hidden">
<b class="m" style="left:6px;top:3px;color:#000000;">0x12FFB0</b>
<b class="m" style="left:105px;top:3px;color:#000000;">0x0</b>
</div>
<div style="left:0;top:130px;width:330px;height:13px;overflow:hidden">
<b class="m" style="left:6px;top:3px;color:#000000;">0x12FFB4</b>
<b class="m" style="left:105px;top:3px;color:#000000;">0x0</b>
</div>
<div style="left:0;top:143px;width:330px;height:13px;overflow:hidden">
<b class="m" style="left:6px;top:3px;color:#000000;">0x12FFB8</b>
<b class="m" style="left:105px;top:3px;color:#000000;">0x0</b>
</div>
<div style="left:0;top:156px;width:330px;height:13px;overflow:hidden">
<b class="m" style="left:6px;top:3px;color:#000000;">0x12FFBC</b>
<b class="m" style="left:105px;top:3px;color:#000000;">0x0</b>
</div>
<div style="left:0;top:169px;width:330px;height:13px;overflow:hidden">
<b class="m" style="left:6px;top:3px;color:#000000;">0x12FFC0</b>
<b class="m" style="left:105px;top:3px;color:#000000;">0x0</b>
</div>
<div style="left:0;top:182px;width:330px;height:13px;overflow:hidden">
<b class="m" style="left:6px;top:3px;color:#000000;">0x12FFC4</b>
<b class="m" style="left:105px;top:3px;color:#000000;">0xFFFFFFFF</b>
</div>
<div style="left:0;top:195px;width:330px;height:13px;overflow:hidden">
<b class="m" style="left:6px;top:3px;color:#000000;">0x12FFC8</b>
<b class="m" style="left:105px;top:3px;color:#000000;">0x0</b>
</div>
<div style="left:0;top:208px;width:330px;height:13px;overflow:hidden">
<b class="m" style="left:6px;top:3px;color:#000000;">0x12FFCC</b>
<b class="m" style="left:105px;top:3px;color:#000000;">0x0</b>
</div>
<div style="left:0;top:221px;width:330px;height:13px;overflow:hidden">
<b class="m" style="left:6px;top:3px;color:#000000;">0x12FFD0</b>
<b class="m" style="left:105px;top:3px;color:#000000;">0x0</b>
</div>
<div style="left:0;top:234px;width:330px;height:13px;overflow:hidden">
<b class="m" style="left:6px;top:3px;color:#000000;">0x12FFD4</b>
<b class="m" style="left:105px;top:3px;color:#000000;">0x0</b>
</div>
<div style="left:0;top:247px;width:330px;height:13px;overflow:hidden">
<b class="m" style="left:6px;top:3px;color:#000000;">0x12FFD8</b>
<b class="m" style="left:105px;top:3px;color:#000000;">0x0</b>
</div>
<div style="left:0;top:260px;width:330px;height:13px;overflow:hidden">
<b class="m" style="left:6px;top:3px;color:#000000;">0x12FFDC</b>
<b class="m" style="left:105px;top:3px;color:#000000;">0x0</b>
</div>
<div style="left:0;top:273px;width:330px;height:13px;overflow:hidden">
<b class="m" style="left:6px;top:3px;color:#000000;">0x12FFE0</b>
<b class="m" style="left:105px;top:3px;color:#000000;">0x0</b>
</div>
<div style="left:0;top:286px;width:330px;height:13px;overflow:hidden">
<b class="m" style="left:6px;top:3px;color:#000000;">0x12FFE4</b>
<b class="m" style="left:105px;top:3px;color:#000000;">0xFFFFFFFF</b>
</div>
<div style="left:0;top:299px;width:330px;height:13px;overflow:hidden">
<b class="m" style="left:6px;top:3px;color:#000000;">0x12FFE8</b>
<b class="m" style="left:105px;top:3px;color:#000000;">0x0</b>
</div>
</div>
<div style="left:1434px;top:150px;width:5px;height:100px;overflow:hidden">
<b class="m" style="left:0px;top:20px;color:#000;">1</b>
<b class="m" style="left:0px;top:37px;color:#000;">Z</b>
<b class="m" style="left:0px;top:55px;color:#000;">1</b>
</div>
<b class="s" style="left:9px;top:816px;color:#000;">Adding Breakpoint ...</b>
<b class="s" style="left:10px;top:837px;color:#000;">Add Breakpoint</b>
<b class="s" style="left:428px;top:837px;color:#000;">Add BreakPoint</b>
<b class="s" style="left:749px;top:837px;color:#000;font-size:11.6px">Process is Paused</b></div></body></html>
